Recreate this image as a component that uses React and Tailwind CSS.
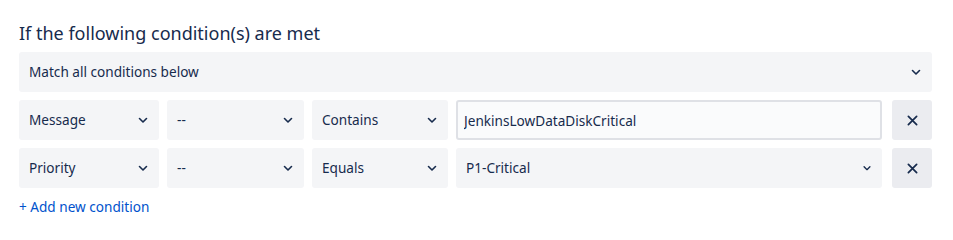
import React from "react";

function Chevron({ small }) {
  return (
    <svg
      width={small ? 10 : 12}
      height={small ? 10 : 12}
      viewBox="0 0 12 12"
      fill="none"
      className="shrink-0"
    >
      <path
        d="M2.5 4.5L6 8L9.5 4.5"
        stroke="#172b4d"
        strokeWidth="1.6"
        strokeLinecap="round"
        strokeLinejoin="round"
      />
    </svg>
  );
}

function SelectBox({ label, width, small }) {
  return (
    <div
      className={`${width} h-10 flex items-center justify-between rounded-[3px] bg-[#f4f5f7] pl-[10px] pr-[10px] text-[13.6px] text-[#172b4d]`}
    >
      <span>{label}</span>
      <Chevron small={small} />
    </div>
  );
}

function RemoveButton() {
  return (
    <button className="w-10 h-10 flex items-center justify-center rounded-[3px] bg-[#ebecf0]">
      <svg width="11" height="11" viewBox="0 0 12 12" fill="none">
        <path
          d="M1.5 1.5L10.5 10.5M10.5 1.5L1.5 10.5"
          stroke="#172b4d"
          strokeWidth="1.9"
          strokeLinecap="round"
        />
      </svg>
    </button>
  );
}

export default function App() {
  const font = { fontFamily: '"Noto Sans", "Open Sans", sans-serif' };

  return (
    <div className="w-[953px] h-[240px] bg-white" style={font}>
      <div className="pl-[19px] pr-[21px] pt-[20px]">
        <h2 className="text-[18px] leading-[26px] text-[#172b4d] mb-[6px]">
          If the following condition(s) are met
        </h2>

        <SelectBox label="Match all conditions below" width="w-full" />

        <div className="mt-2 flex flex-col gap-2">
          <div className="flex items-center">
            <SelectBox label="Message" width="w-[140px]" />
            <div className="w-2" />
            <SelectBox label="--" width="w-[137px]" />
            <div className="w-2" />
            <SelectBox label="Contains" width="w-[136px]" />
            <div className="w-2" />
            <input
              readOnly
              value="JenkinsLowDataDiskCritical"
              className="w-[426px] h-10 rounded-[3px] border-2 border-[#dfe1e6] bg-[#fafbfc] px-[6px] text-[13.6px] text-[#172b4d] outline-none"
            />
            <div className="w-[10px]" />
            <RemoveButton />
          </div>

          <div className="flex items-center">
            <SelectBox label="Priority" width="w-[140px]" />
            <div className="w-2" />
            <SelectBox label="--" width="w-[137px]" />
            <div className="w-2" />
            <SelectBox label="Equals" width="w-[136px]" />
            <div className="w-2" />
            <SelectBox label="P1-Critical" width="w-[426px]" small />
            <div className="w-[10px]" />
            <RemoveButton />
          </div>
        </div>

        <button className="mt-[9px] text-[13.6px] text-[#0052cc] leading-[20px]">
          + Add new condition
        </button>
      </div>
    </div>
  );
}
